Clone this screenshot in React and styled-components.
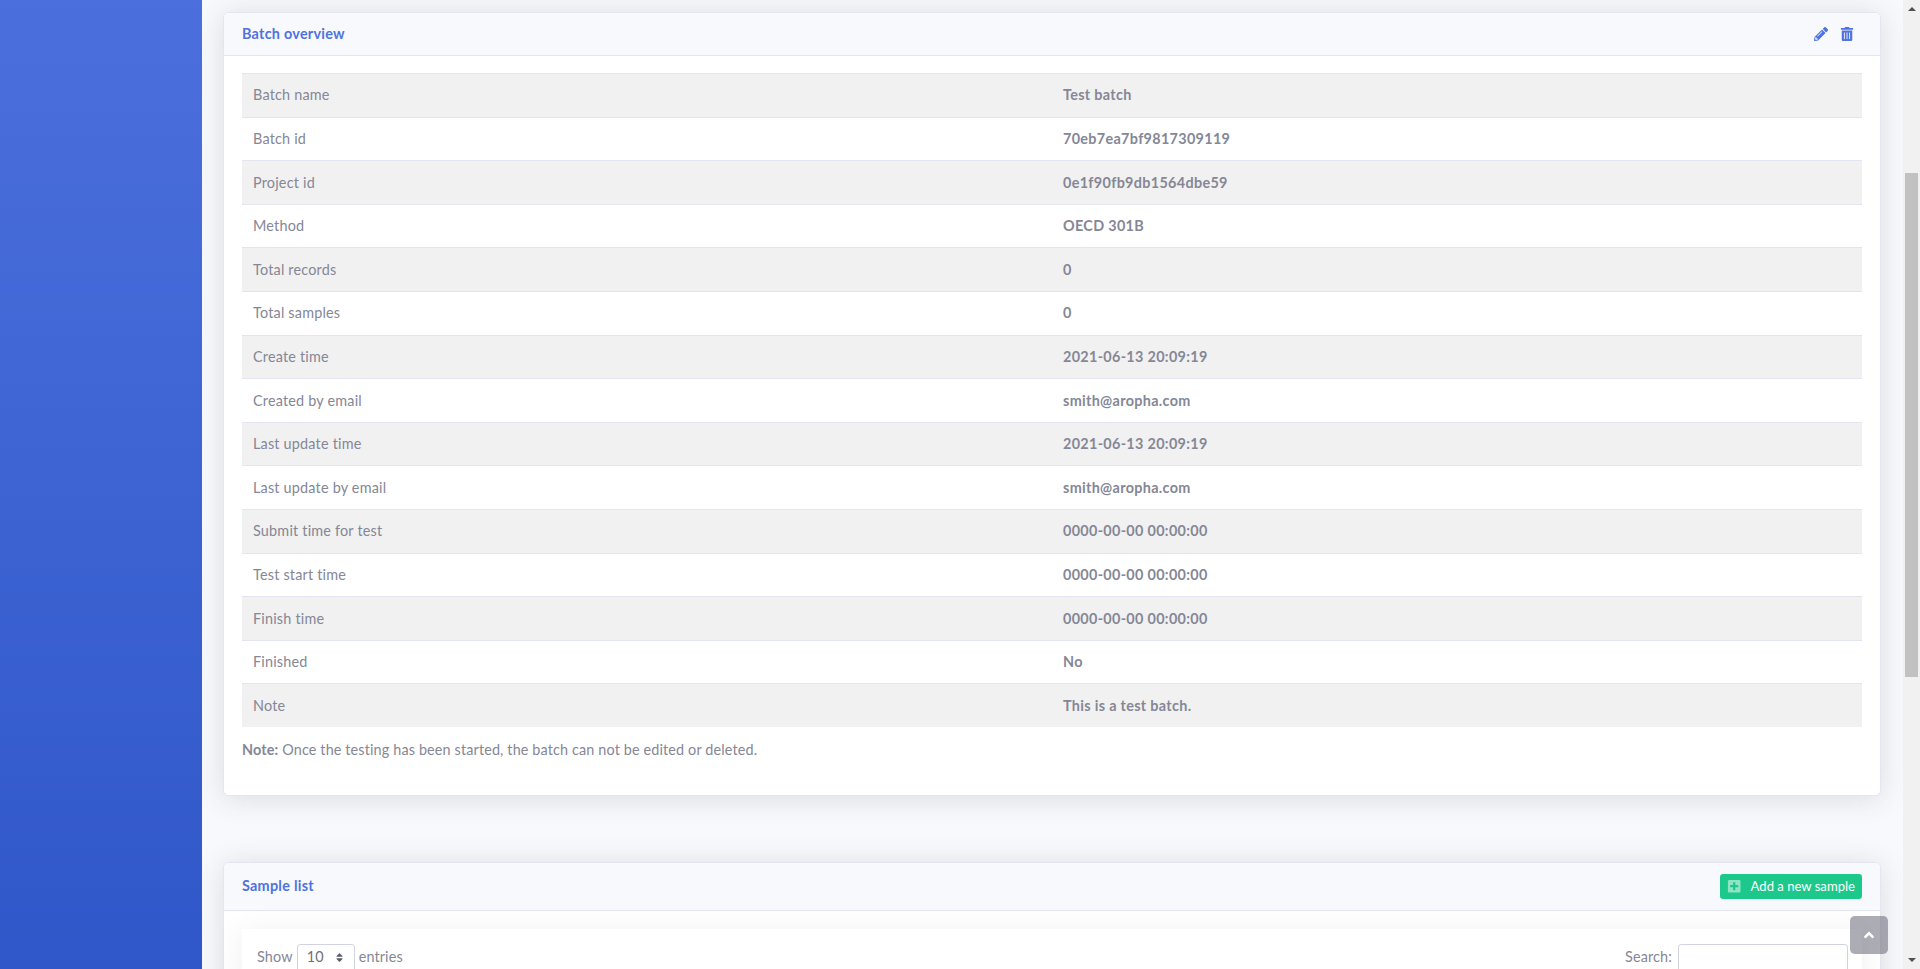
import React from "react";
import styled, { createGlobalStyle } from "styled-components";
import { FaPencilAlt, FaTrashAlt, FaPlusSquare, FaSort, FaAngleUp } from "react-icons/fa";

const rows = [
  ["Batch name", "Test batch"],
  ["Batch id", "70eb7ea7bf9817309119"],
  ["Project id", "0e1f90fb9db1564dbe59"],
  ["Method", "OECD 301B"],
  ["Total records", "0"],
  ["Total samples", "0"],
  ["Create time", "2021-06-13 20:09:19"],
  ["Created by email", "smith@aropha.com"],
  ["Last update time", "2021-06-13 20:09:19"],
  ["Last update by email", "smith@aropha.com"],
  ["Submit time for test", "0000-00-00 00:00:00"],
  ["Test start time", "0000-00-00 00:00:00"],
  ["Finish time", "0000-00-00 00:00:00"],
  ["Finished", "No"],
  ["Note", "This is a test batch."],
];

export default function App() {
  return (
    <>
      <GlobalStyle />
      <Shell>
        <Sidebar />
        <Content>
          <OverviewCard>
            <CardHeader>
              <CardTitle>Batch overview</CardTitle>
              <HeaderIcons>
                <FaPencilAlt size={14} />
                <FaTrashAlt size={14} />
              </HeaderIcons>
            </CardHeader>
            <CardBody>
              <DetailTable>
                <tbody>
                  {rows.map(([label, value]) => (
                    <tr key={label}>
                      <td>{label}</td>
                      <th>{value}</th>
                    </tr>
                  ))}
                </tbody>
              </DetailTable>
              <NoteText>
                <strong>Note:</strong> Once the testing has been started, the batch can not be edited or deleted.
              </NoteText>
            </CardBody>
          </OverviewCard>

          <Card>
            <SampleHeader>
              <CardTitle>Sample list</CardTitle>
              <AddButton>
                <FaPlusSquare size={14.4} />
                <span>Add a new sample</span>
              </AddButton>
            </SampleHeader>
            <SampleBody>
              <TableBox>
                <Toolbar>
                  <ToolbarGroup>
                    Show
                    <EntriesSelect>
                      10
                      <FaSort size={11} />
                    </EntriesSelect>
                    entries
                  </ToolbarGroup>
                  <ToolbarGroup>
                    Search:
                    <SearchInput type="search" />
                  </ToolbarGroup>
                </Toolbar>
              </TableBox>
            </SampleBody>
          </Card>
        </Content>
        <FakeScrollbar>
          <ScrollArrow />
          <ScrollThumb />
          <ScrollArrow $down />
        </FakeScrollbar>
        <ScrollTop>
          <FaAngleUp size={16} />
        </ScrollTop>
      </Shell>
    </>
  );
}

const GlobalStyle = createGlobalStyle`
  html, body {
    margin: 0;
    height: 100%;
    overflow: hidden;
  }
  body {
    font-family: Lato, "Open Sans", sans-serif;
    font-size: 14.4px;
    line-height: 1.5;
    letter-spacing: 0.14px;
    color: #858796;
    background: #f8f9fc;
  }
`;

const Shell = styled.div`
  position: relative;
  display: flex;
  height: 969px;
  overflow: hidden;
`;

const Sidebar = styled.aside`
  flex: 0 0 202px;
  background: linear-gradient(180deg, #4b70dd 0%, #3057c9 100%);
`;

const Content = styled.main`
  flex: 1;
  min-width: 0;
  overflow: hidden;
  padding: 12px 22px 0 21px;
  background: #f8f9fc;
`;

const Card = styled.section`
  background: #fff;
  border: 1px solid #e3e6f0;
  border-radius: 5.6px;
  box-shadow: 0 2.4px 28px 0 rgba(58, 59, 69, 0.15);
`;

const OverviewCard = styled(Card)`
  margin-bottom: 66px;
`;

const CardHeader = styled.header`
  display: flex;
  align-items: center;
  justify-content: space-between;
  padding: 10.2px 18px;
  background: #f8f9fc;
  border-bottom: 1px solid #e3e6f0;
  border-radius: 4.6px 4.6px 0 0;
`;

const SampleHeader = styled(CardHeader)`
  padding: 11px 18px;
`;

const CardTitle = styled.h6`
  margin: 0;
  font-size: 14.4px;
  font-weight: 700;
  line-height: 21.6px;
  letter-spacing: 0.26px;
  color: #4e73df;
`;

const HeaderIcons = styled.div`
  display: flex;
  align-items: center;
  gap: 12px;
  margin-right: 8px;
  color: #4e73df;
`;

const CardBody = styled.div`
  padding: 17px 18px 18px;
`;

const SampleBody = styled(CardBody)`
  padding-top: 18px;
`;

const DetailTable = styled.table`
  width: 100%;
  table-layout: fixed;
  border-collapse: separate;
  border-spacing: 0;
  margin-bottom: 12.2px;

  tr:nth-child(odd) {
    background: #f1f1f1;
  }

  td,
  th {
    padding: 10.5px 11px;
    border-top: 1px solid #e3e6f0;
    text-align: left;
    font-size: 14.4px;
    line-height: 21.6px;
    color: #858796;
  }

  td {
    letter-spacing: 0.2px;
  }

  th {
    font-weight: 700;
    letter-spacing: 0.32px;
  }
`;

const NoteText = styled.p`
  margin: 0 0 16px;
  font-size: 14.4px;
  line-height: 21.6px;

  strong {
    font-weight: 700;
  }
`;

const AddButton = styled.button`
  display: flex;
  align-items: center;
  gap: 9px;
  height: 25px;
  padding: 0 7px;
  border: 0;
  border-radius: 3.2px;
  background: #1cc88a;
  color: #fff;
  font-family: inherit;
  font-size: 13.1px;

  svg {
    color: rgba(255, 255, 255, 0.5);
  }
`;

const TableBox = styled.div`
  background: #fff;
  padding: 15px 14px 15px 15px;
  box-shadow: 0 2.4px 28px 0 rgba(58, 59, 69, 0.08);
`;

const Toolbar = styled.div`
  display: flex;
  align-items: flex-start;
  justify-content: space-between;
`;

const ToolbarGroup = styled.label`
  display: flex;
  align-items: flex-start;
  gap: 4px;
  line-height: 26px;
`;

const EntriesSelect = styled.div`
  display: flex;
  align-items: center;
  justify-content: space-between;
  box-sizing: border-box;
  width: 58px;
  height: 31px;
  padding: 0 9px 4px 9px;
  border: 1px solid #d1d3e2;
  border-radius: 3.2px;
  color: #6e707e;
  background: #fff;

  svg {
    color: #5a5c69;
  }
`;

const SearchInput = styled.input`
  box-sizing: border-box;
  width: 170px;
  height: 31px;
  margin-left: 2px;
  border: 1px solid #d1d3e2;
  border-radius: 3.2px;
  background: #fff;
  outline: none;
`;

const FakeScrollbar = styled.div`
  flex: 0 0 17px;
  display: flex;
  flex-direction: column;
  align-items: center;
  background: #f1f1f1;
`;

const ScrollArrow = styled.div`
  flex: 0 0 17px;
  width: 0;
  height: 0;
  box-sizing: content-box;
  margin-top: ${(p) => (p.$down ? "auto" : "0")};
  position: relative;

  &::after {
    content: "";
    position: absolute;
    left: -4px;
    top: ${(p) => (p.$down ? "6px" : "7px")};
    border-left: 4px solid transparent;
    border-right: 4px solid transparent;
    ${(p) => (p.$down ? "border-top: 4px solid #505050;" : "border-bottom: 4px solid #505050;")}
  }
`;

const ScrollThumb = styled.div`
  width: 13px;
  height: 504px;
  margin-top: 156px;
  background: #c1c1c1;
`;

const ScrollTop = styled.a`
  position: absolute;
  left: 1850px;
  top: 916px;
  display: flex;
  align-items: center;
  justify-content: center;
  width: 38px;
  height: 38px;
  border-radius: 4.8px;
  background: rgba(90, 92, 105, 0.5);
  color: #fff;
`;
